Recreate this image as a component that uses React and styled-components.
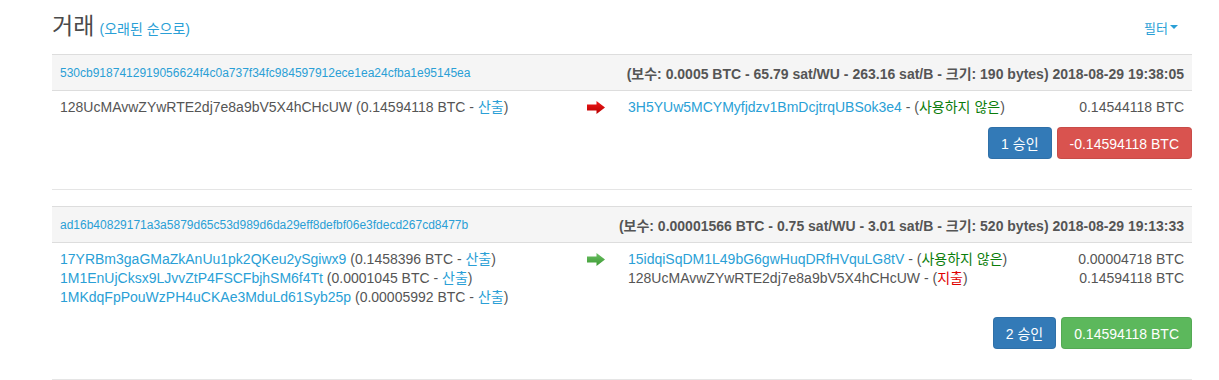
import React from "react";
import styled, { createGlobalStyle } from "styled-components";

const GlobalStyle = createGlobalStyle`
    body {
        margin: 0;
        background: #fff;
        font-family: "Liberation Sans", "Noto Sans CJK KR", sans-serif;
        font-size: 14px;
        color: #555;
    }
`;

const transactions = [
    {
        hash: "530cb9187412919056624f4c0a737f34fc984597912ece1ea24cfba1e95145ea",
        info: "(보수: 0.0005 BTC - 65.79 sat/WU - 263.16 sat/B - 크기: 190 bytes) 2018-08-29 19:38:05",
        inputs: [{ address: "128UcMAvwZYwRTE2dj7e8a9bV5X4hCHcUW", amount: "0.14594118", link: false }],
        outputs: [{ address: "3H5YUw5MCYMyfjdzv1BmDcjtrqUBSok3e4", status: "unspent", amount: "0.14544118 BTC", link: true }],
        arrow: "red",
        confirmations: "1 승인",
        total: "-0.14594118 BTC",
        positive: false,
    },
    {
        hash: "ad16b40829171a3a5879d65c53d989d6da29eff8defbf06e3fdecd267cd8477b",
        info: "(보수: 0.00001566 BTC - 0.75 sat/WU - 3.01 sat/B - 크기: 520 bytes) 2018-08-29 19:13:33",
        inputs: [
            { address: "17YRBm3gaGMaZkAnUu1pk2QKeu2ySgiwx9", amount: "0.1458396", link: true },
            { address: "1M1EnUjCksx9LJvvZtP4FSCFbjhSM6f4Tt", amount: "0.0001045", link: true },
            { address: "1MKdqFpPouWzPH4uCKAe3MduLd61Syb25p", amount: "0.00005992", link: true },
        ],
        outputs: [
            { address: "15idqiSqDM1L49bG6gwHuqDRfHVquLG8tV", status: "unspent", amount: "0.00004718 BTC", link: true },
            { address: "128UcMAvwZYwRTE2dj7e8a9bV5X4hCHcUW", status: "spent", amount: "0.14594118 BTC", link: false },
        ],
        arrow: "green",
        confirmations: "2 승인",
        total: "0.14594118 BTC",
        positive: true,
    },
];

function Arrow({ color }) {
    const id = `grad-${color}`;
    const stops = color === "red" ? ["#f01a1a", "#b80000"] : ["#6cc063", "#3c9a34"];
    return (
        <svg width="18" height="13" viewBox="0 0 18 13">
            <defs>
                <linearGradient id={id} x1="0" y1="0" x2="0" y2="1">
                    <stop offset="0" stopColor={stops[0]} />
                    <stop offset="1" stopColor={stops[1]} />
                </linearGradient>
            </defs>
            <path d="M0 3.5 H9.5 V0 L18 6.5 L9.5 13 V9.5 H0 Z" fill={`url(#${id})`} />
        </svg>
    );
}

export default function App() {
    return (
        <Page>
            <GlobalStyle />
            <TitleRow>
                <Title>
                    거래 <Sub>(오래된 순으로)</Sub>
                </Title>
                <Filter>
                    필터<Caret />
                </Filter>
            </TitleRow>

            {transactions.map(tx => (
                <Tx key={tx.hash}>
                    <TxHeader>
                        <Hash>{tx.hash}</Hash>
                        <Info>{tx.info}</Info>
                    </TxHeader>
                    <TxBody>
                        <Column>
                            {tx.inputs.map(input => (
                                <Line key={input.address}>
                                    <Address $link={input.link}>{input.address}</Address> ({input.amount} BTC - <Link>산출</Link>)
                                </Line>
                            ))}
                        </Column>
                        <ArrowCell>
                            <Arrow color={tx.arrow} />
                        </ArrowCell>
                        <Column>
                            {tx.outputs.map(output => (
                                <OutLine key={output.address}>
                                    <span>
                                        <Address $link={output.link}>{output.address}</Address> - (
                                        {output.status === "unspent"
                                            ? <Status $spent={false}>사용하지 않은</Status>
                                            : <Status $spent={true}>지출</Status>}
                                        )
                                    </span>
                                    <span>{output.amount}</span>
                                </OutLine>
                            ))}
                        </Column>
                    </TxBody>
                    <Actions>
                        <Button $kind="primary">{tx.confirmations}</Button>
                        <Button $kind={tx.positive ? "success" : "danger"}>{tx.total}</Button>
                    </Actions>
                </Tx>
            ))}
        </Page>
    );
}

const Page = styled.div`
    padding: 0 27px 0 52px;
`;

const TitleRow = styled.div`
    height: 54px;
    display: flex;
    justify-content: space-between;
    align-items: center;
`;

const Title = styled.h1`
    margin: 0;
    font-family: "Noto Sans CJK KR", sans-serif;
    font-weight: 400;
    font-size: 23px;
    color: #4a4a4a;
    margin-top: -6px;
`;

const Sub = styled.small`
    font-family: "Liberation Sans", "Noto Sans CJK KR", sans-serif;
    font-size: 14px;
    color: #2a9fd6;
`;

const Filter = styled.span`
    color: #2a9fd6;
    font-size: 13px;
    margin-right: 14px;
    display: flex;
    align-items: center;
`;

const Caret = styled.span`
    display: inline-block;
    width: 0;
    height: 0;
    margin-left: 2px;
    border-top: 4px solid #2a9fd6;
    border-left: 4px solid transparent;
    border-right: 4px solid transparent;
`;

const Tx = styled.div`
    border-bottom: 1px solid #e5e5e5;
    padding-bottom: 30px;
    margin-bottom: 16px;
`;

const TxHeader = styled.div`
    height: 35px;
    padding: 0 8px;
    display: flex;
    justify-content: space-between;
    align-items: center;
    background: #f5f5f5;
    border-top: 1px solid #ddd;
    border-bottom: 1px solid #ddd;
`;

const Hash = styled.span`
    color: #2a9fd6;
    font-size: 12px;
`;

const Info = styled.span`
    font-weight: 700;
    font-size: 14px;
    color: #555;
`;

const TxBody = styled.div`
    display: grid;
    grid-template-columns: 527px 41px 1fr;
    padding: 7px 8px 0;
`;

const Column = styled.div`
    display: flex;
    flex-direction: column;
`;

const Line = styled.div`
    line-height: 19px;
`;

const OutLine = styled.div`
    line-height: 19px;
    display: flex;
    justify-content: space-between;
`;

const ArrowCell = styled.div`
    padding-top: 3px;
`;

const Address = styled.span`
    color: ${p => (p.$link ? "#2a9fd6" : "#555")};
`;

const Link = styled.span`
    color: #2a9fd6;
`;

const Status = styled.span`
    color: ${p => (p.$spent ? "#e00000" : "#0a7d0a")};
`;

const Actions = styled.div`
    display: flex;
    justify-content: flex-end;
    gap: 5px;
    margin-top: 10px;
`;

const colors = {
    primary: "#337ab7",
    danger: "#d9534f",
    success: "#5cb85c",
};

const Button = styled.span`
    display: inline-block;
    height: 32px;
    line-height: 32px;
    padding: 0 12px;
    border-radius: 4px;
    font-size: 14px;
    color: #fff;
    background: ${p => colors[p.$kind]};
    border: 1px solid rgba(0, 0, 0, 0.08);
    box-sizing: border-box;
`;
